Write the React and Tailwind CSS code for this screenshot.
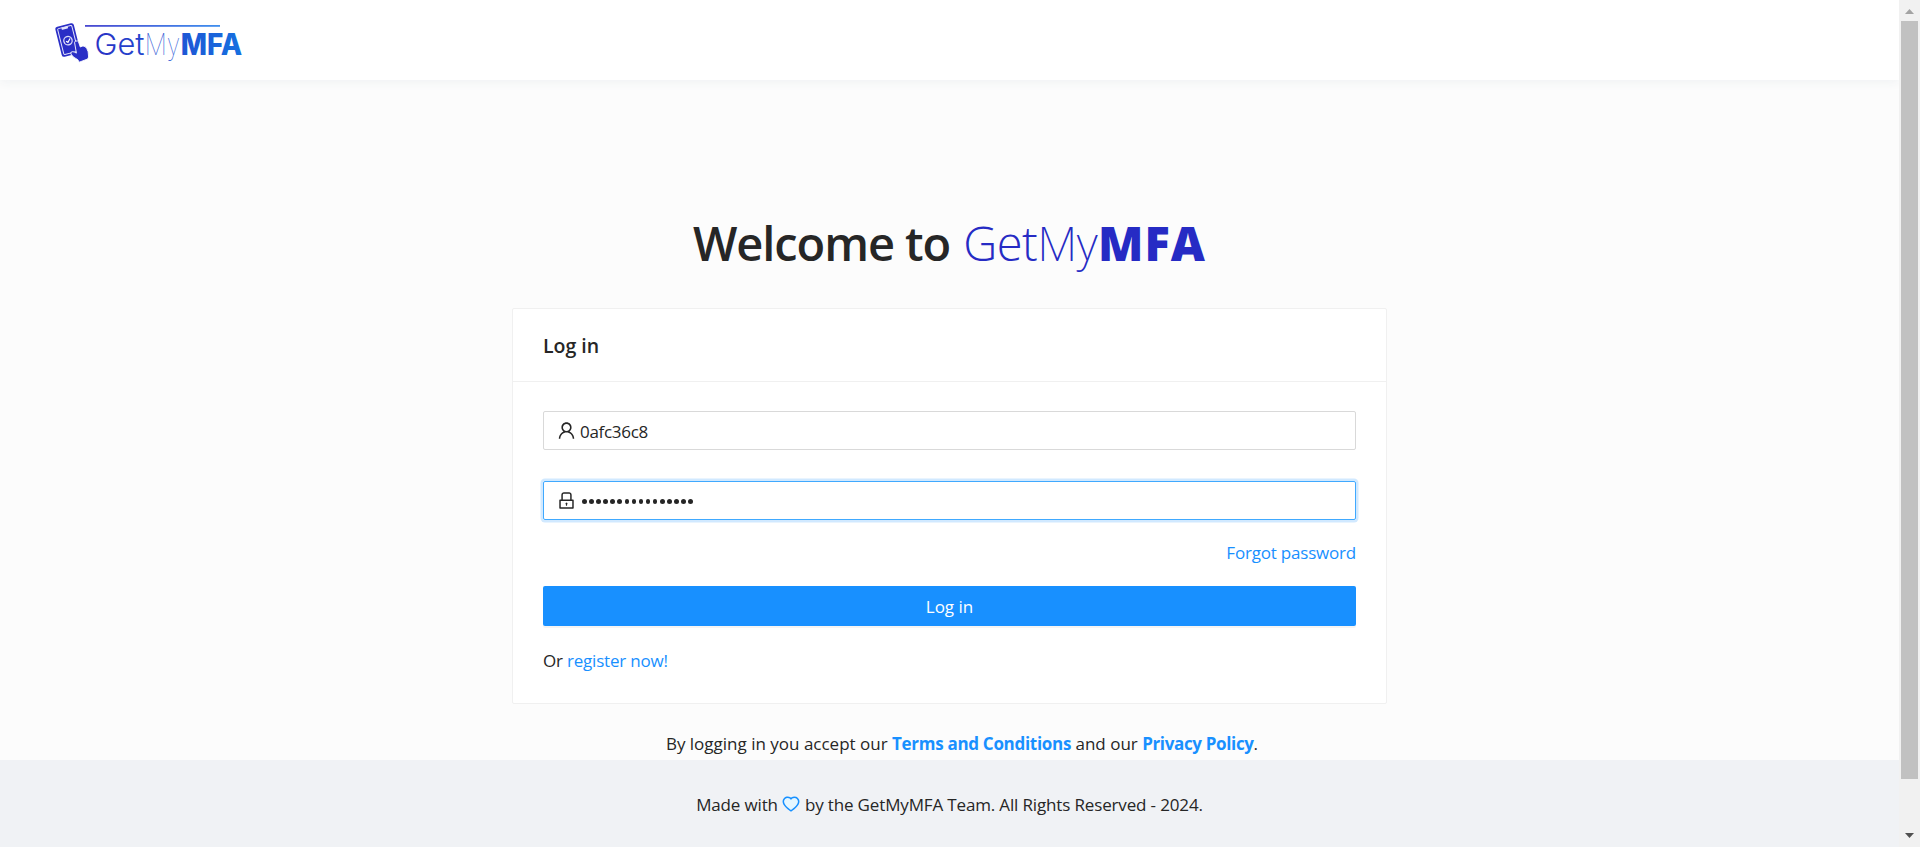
import { AiOutlineUser, AiOutlineLock, AiOutlineHeart, AiFillHeart } from "react-icons/ai";

function Logo() {
  return (
    <svg width="200" height="50" viewBox="0 0 200 50" className="shrink-0">
      <defs>
        <linearGradient id="brand" gradientUnits="userSpaceOnUse" x1="40" y1="0" x2="192" y2="0">
          <stop offset="0" stopColor="#2a2fc4" />
          <stop offset="1" stopColor="#1670e0" />
        </linearGradient>
        <linearGradient id="rule" gradientUnits="userSpaceOnUse" x1="35" y1="0" x2="170" y2="0">
          <stop offset="0" stopColor="#4a48d0" />
          <stop offset="1" stopColor="#3f8fee" />
        </linearGradient>
      </defs>
      <rect x="35" y="9" width="135" height="1.800" fill="url(#rule)" />
      <g transform="rotate(-14 17.800 24)">
        <rect x="8.300" y="8.500" width="19" height="31" rx="2.500" fill="#2a2ec6" />
        <rect x="10.500" y="10.700" width="14.600" height="26.600" rx="1" fill="none" stroke="#e4e4fa" strokeWidth="1" />
        <path d="M14.500 10.500h6.500v1.500q0 .8-.8.8h-4.900q-.8 0-.8-.8z" fill="#e4e4fa" />
        <circle cx="17.800" cy="24.700" r="4.200" fill="none" stroke="#dcdcf8" strokeWidth="1.300" />
        <path d="M15.900 24.700l1.500 1.600 2.900-3.200" fill="none" stroke="#fff" strokeWidth="1.200" />
      </g>
      <path
        d="M25.600 25.300q1.800-1.200 2.900.5l1.800 5.200q4-2.500 6.500 1.500 1.800 2.300 1.800 8.500l-.9 2-8.500 3.200-1.500-2.600q-5-2.200-6.800-5.600-.6-2 1.300-2.300 1.800-.2 4.200 1.400l-1.800-10.400q-.1-1.200 1-1.800z"
        fill="#2a2ec6"
        stroke="#fff"
        strokeWidth="0.900"
      />
      <g fill="url(#brand)" fontFamily="Inter, sans-serif" fontSize="30">
        <text x="44.500" y="38.500" fontWeight="300" textLength="50" lengthAdjust="spacingAndGlyphs">Get</text>
        <text x="94.700" y="38.500" fontWeight="100" textLength="35.500" lengthAdjust="spacingAndGlyphs">My</text>
        <text x="130.700" y="38.500" fontWeight="800" textLength="61.500" lengthAdjust="spacingAndGlyphs">MFA</text>
      </g>
    </svg>
  );
}

export default function App() {
  return (
    <div className="flex h-[847px] w-full overflow-hidden bg-[#fcfcfc] font-['Open_Sans',sans-serif] text-[17px] text-[#262626]">
      <div className="flex flex-1 flex-col">
        <header className="flex h-20 shrink-0 items-start bg-white pl-[50px] pt-4 shadow-[0_2px_10px_#eff1f3]">
          <Logo />
        </header>
        <main className="flex h-[680px] shrink-0 flex-col items-center">
          <h1 className="mt-[131px] flex h-[64px] w-[513px] whitespace-nowrap text-[47px] leading-[64px] font-semibold">
            <span className="w-[270.500px] tracking-[-1.100px]">Welcome to</span>
            <span className="w-[74px] font-[350] tracking-[-0.500px] text-[#262bc4]">Get</span>
            <span className="w-[61px] font-['Noto_Sans'] font-extralight tracking-[-0.500px] text-[#262bc4]">My</span>
            <span className="font-extrabold tracking-[1px] text-[#262bc4]">MFA</span>
          </h1>
          <section className="mt-[33px] h-[396px] w-[875px] rounded-[2px] border border-[#f0f0f0] bg-white">
            <h2 className="flex h-[73px] items-center border-b border-[#f0f0f0] px-[30px] pt-[2px] text-[19.500px] font-semibold">Log in</h2>
            <form className="px-[30px] pt-[29px]">
              <div className="flex h-[39px] items-center gap-[3px] rounded-[2px] border border-[#d9d9d9] px-[12px]">
                <AiOutlineUser size={21} />
                <span className="pt-[2px] tracking-[-0.300px]">0afc36c8</span>
              </div>
              <div className="mt-[31px] flex h-[39px] items-center gap-[5px] rounded-[2px] border border-[#40a9ff] px-[12px] shadow-[0_0_0_2.500px_rgba(24,144,255,0.2)]">
                <AiOutlineLock size={21} />
                <span className="flex gap-[2.600px] pt-[2px]">
                  {Array.from({ length: 16 }, (_, i) => (
                    <i key={i} className="h-[4.500px] w-[4.500px] rounded-full bg-[#262626]" />
                  ))}
                </span>
              </div>
              <a className="mt-[19px] block h-[28px] text-right leading-[28px] tracking-[-0.200px] text-[#1890ff]">Forgot password</a>
              <button type="button" className="mt-[19px] block h-10 w-full rounded-[2px] bg-[#1890ff] pt-px text-white shadow-[0_2px_0_rgba(0,0,0,0.045)]">Log in</button>
              <p className="mt-[21px] h-[28px] leading-[28px] tracking-[-0.200px]">
                Or <a className="text-[#1890ff]">register now!</a>
              </p>
            </form>
          </section>
          <p className="mt-[26px] ml-[25px] h-[28px] whitespace-nowrap leading-[28px]">
            By logging in you accept our <b className="tracking-[-0.300px] text-[#1890ff]">Terms and Conditions</b> and our <b className="tracking-[-0.350px] text-[#1890ff]">Privacy Policy</b>.
          </p>
        </main>
        <footer className="flex flex-1 items-start justify-center whitespace-nowrap bg-[#f0f2f5] pt-[31px] leading-[28px] tracking-[-0.150px]">
          <span>Made with</span>
          <span className="mx-[3.500px] mt-[3px] grid">
            <AiFillHeart size={20} className="col-start-1 row-start-1 text-[#e6f7ff]" />
            <AiOutlineHeart size={20} className="col-start-1 row-start-1 text-[#1890ff]" />
          </span>
          <span>by the GetMyMFA Team. All Rights Reserved - 2024.</span>
        </footer>
      </div>
      <div className="flex w-[21px] flex-col items-center justify-between bg-[#f1f1f1]">
        <svg width="21" height="21" viewBox="0 0 21 21"><path d="M6 14l4.500-5 4.500 5z" fill="#a3a3a3" /></svg>
        <div className="mb-auto h-[758px] w-[17px] bg-[#c1c1c1]" />
        <svg width="21" height="21" viewBox="0 0 21 21"><path d="M6 7l4.500 5 4.500-5z" fill="#505050" /></svg>
      </div>
    </div>
  );
}
